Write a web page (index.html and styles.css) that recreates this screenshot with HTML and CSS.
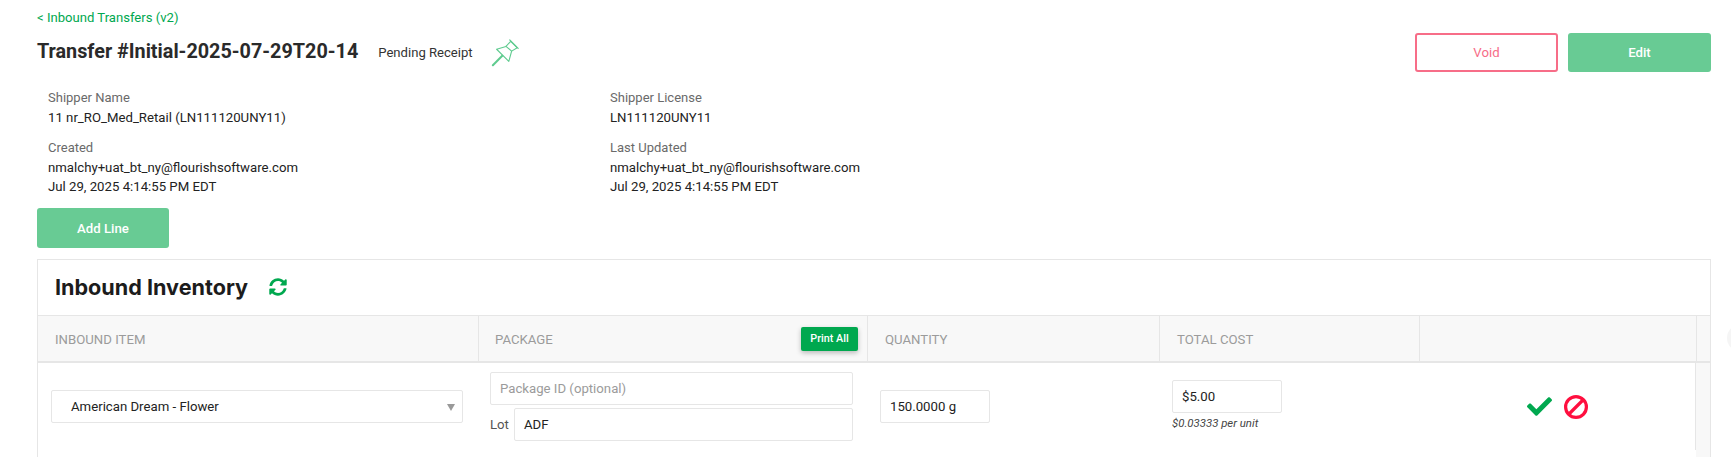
FILE: index.html
```html
<!DOCTYPE html>
<html lang="en">
<head>
<meta charset="utf-8">
<title>Transfer</title>
<link rel="stylesheet" href="styles.css">
</head>
<body>
<div class="page">
  <a class="back" href="#">&lt; Inbound Transfers (v2)</a>
  <header class="top">
    <h1 class="title">Transfer #Initial-2025-07-29T20-14</h1>
    <span class="status">Pending Receipt</span>
    <svg class="pin" viewBox="0 0 32 32" fill="none" stroke="#5fcb8f" stroke-width="1.2" stroke-linejoin="round" stroke-linecap="round">
      <path d="M6 12 L16 9 L21 3.5 L28 10.5 L22 14 L19 25 Z"/>
      <path d="M20 2 L29 11"/>
      <path d="M16 9 L22 14"/>
      <path d="M2 29 L12 19" stroke-width="2.2"/>
    </svg>
    <div class="actions">
      <button class="btn btn-void">Void</button>
      <button class="btn btn-green">Edit</button>
    </div>
  </header>

  <section class="meta">
    <div class="meta-item">
      <div class="label">Shipper Name</div>
      <div class="value">11 nr_RO_Med_Retail (LN111120UNY11)</div>
    </div>
    <div class="meta-item">
      <div class="label">Shipper License</div>
      <div class="value">LN111120UNY11</div>
    </div>
    <div class="meta-item">
      <div class="label">Created</div>
      <div class="value">nmalchy+uat_bt_ny@flourishsoftware.com</div>
      <div class="value">Jul 29, 2025 4:14:55 PM EDT</div>
    </div>
    <div class="meta-item">
      <div class="label">Last Updated</div>
      <div class="value">nmalchy+uat_bt_ny@flourishsoftware.com</div>
      <div class="value">Jul 29, 2025 4:14:55 PM EDT</div>
    </div>
  </section>

  <button class="btn btn-green btn-add">Add Line</button>

  <section class="card">
    <div class="card-head">
      <h2 class="card-title">Inbound Inventory</h2>
      <svg class="refresh" viewBox="0 0 512 512" fill="#00a84f"><path d="M370.72 133.28C339.458 104.008 298.888 87.962 255.848 88c-77.458.068-144.328 53.178-162.791 126.85-1.344 5.363-6.122 9.15-11.651 9.15H24.103c-7.498 0-13.194-6.807-11.807-14.176C33.933 94.924 134.813 8 256 8c66.448 0 126.791 26.136 171.315 68.685L463.03 40.97C478.149 25.851 504 36.559 504 57.941V192c0 13.255-10.745 24-24 24H345.941c-21.382 0-32.09-25.851-16.971-40.971l41.75-41.749zM32 296h134.059c21.382 0 32.09 25.851 16.971 40.971l-41.75 41.75c31.262 29.273 71.835 45.319 114.876 45.28 77.418-.07 144.315-53.144 162.787-126.849 1.344-5.363 6.122-9.15 11.651-9.15h57.304c7.498 0 13.194 6.807 11.807 14.176C478.067 417.076 377.187 504 256 504c-66.448 0-126.791-26.136-171.315-68.685L48.97 471.03C33.851 486.149 8 475.441 8 454.059V320c0-13.255 10.745-24 24-24z"/></svg>
    </div>
    <div class="thead">
      <div class="th">Inbound Item</div>
      <div class="th th-package">Package <button class="print">Print All</button></div>
      <div class="th">Quantity</div>
      <div class="th">Total Cost</div>
      <div class="th"></div>
      <div class="th th-last"></div>
    </div>
    <div class="tbody">
      <div class="td td-item">
        <div class="field field-select">American Dream - Flower<span class="caret"></span></div>
      </div>
      <div class="td td-package">
        <div class="field placeholder">Package ID (optional)</div>
        <div class="lot"><span class="lot-label">Lot</span><div class="field field-lot">ADF</div></div>
      </div>
      <div class="td td-qty"><div class="field field-num">150.0000 g</div></div>
      <div class="td td-cost">
        <div class="field field-num">$5.00</div>
        <div class="per-unit">$0.03333 per unit</div>
      </div>
      <div class="td td-actions">
        <svg class="check" viewBox="0 0 512 512" fill="#00a84f"><path d="M173.898 439.404l-166.4-166.4c-9.997-9.997-9.997-26.206 0-36.204l36.203-36.204c9.997-9.998 26.207-9.998 36.204 0L192 312.69 432.095 72.596c9.997-9.997 26.207-9.997 36.204 0l36.203 36.204c9.997 9.997 9.997 26.206 0 36.204l-294.4 294.401c-9.998 9.997-26.207 9.997-36.204-.001z"/></svg>
        <svg class="ban" viewBox="0 0 24 24" fill="none" stroke="#ff0f3f" stroke-width="3.2"><circle cx="12" cy="12" r="10.4"/><path d="M5 19 L19 5"/></svg>
      </div>
      <div class="td-strip"></div>
    </div>
  </section>
  <div class="edge-dot"></div>
</div>
</body>
</html>
```
FILE: styles.css
```css
* { box-sizing: border-box; }
html, body { margin: 0; padding: 0; background: #fff; }
body { font-family: Roboto, "Liberation Sans", sans-serif; font-size: 13.2px; color: #222; }
.page { position: relative; width: 1731px; height: 457px; overflow: hidden; padding: 9px 20px 0 37px; }

.back { display: block; height: 18px; line-height: 18px; font-size: 13.1px; color: #00a84f; text-decoration: none; }

.top { display: flex; align-items: center; height: 39px; margin-top: 6px; margin-bottom: 15px; }
.title { margin: -2px 0 0; font-size: 19.8px; font-weight: 700; color: #2a2a2a; line-height: 26px; }
.status { margin-left: 20px; font-size: 13.1px; color: #333; }
.pin { width: 30px; height: 30px; margin-left: 18px; }
.actions { display: flex; gap: 10px; margin-left: auto; }

.btn { display: block; width: 143px; height: 39px; padding: 0; border-radius: 3px; font-family: inherit; font-size: 13.2px; font-weight: 500; }
.btn-void { background: #fff; border: 2px solid #f76d88; color: #f76d88; font-weight: 400; }
.btn-green { background: #68cb94; border: 0; color: #fff; }
.btn-add { width: 132px; height: 40px; margin: 11.5px 0 11px; }

.meta { display: grid; grid-template-columns: 562px 561px; row-gap: 10px; padding: 1px 0 0 11px; }
.label, .value { line-height: 19.5px; font-size: 13.2px; }
.label { line-height: 20px; color: #6a6a6a; font-size: 13px; }
.value { color: #222; }

.card { width: 1674px; height: 260px; border: 1px solid #e6e6e6; }
.card-head { display: flex; align-items: center; height: 56px; padding: 0 0 2px 17px; border-bottom: 1px solid #e6e6e6; }
.card-title { margin: 0; font-family: Inter, sans-serif; font-size: 21.6px; font-weight: 700; color: #1c1c1c; }
.refresh { width: 18px; height: 18px; margin-left: 21px; }

.thead { display: grid; grid-template-columns: 441px 389px 292px 260px 277px 13px; height: 47px; background: #f8f8f8; border-bottom: 2px solid #e6e6e6; }
.th { display: flex; align-items: center; padding: 2px 0 0 17px; border-right: 1px solid #e6e6e6; font-size: 13.2px; color: #9b9b9b; text-transform: uppercase; }
.th-package { justify-content: space-between; padding-left: 16px; padding-right: 9px; }
.th-last { border-right: 0; padding: 0; }
.print { width: 57px; height: 24px; margin-top: -2px; padding: 0; border: 0; border-radius: 2px; background: #00a84f; box-shadow: 0 2px 5px rgba(0, 0, 0, .25); font-family: inherit; font-size: 10.8px; font-weight: 500; color: #fff; text-transform: none; }

.tbody { display: grid; grid-template-columns: 441px 389px 292px 260px 276px 14px; height: 150px; align-items: start; }
.td { height: 87px; display: flex; flex-direction: column; justify-content: center; }
.td-item { padding: 0 16px 0 13px; }
.td-package { padding: 0 15px 0 11px; gap: 3px; }
.td-qty { padding-left: 12px; }
.td-cost { justify-content: flex-start; padding: 17px 0 0 12px; }
.td-actions { flex-direction: row; align-items: center; height: 87px; padding-left: 107px; gap: 12px; border-right: 1px solid #e6e6e6; justify-content: flex-start; }
.td-strip { align-self: stretch; height: 150px; background: #f8f8f8; }

.field { position: relative; height: 33px; line-height: 31px; padding: 0 9px; border: 1px solid #e6e6e6; border-radius: 2px; background: #fff; font-size: 13.2px; color: #222; }
.field-select { padding-left: 19px; }
.caret { position: absolute; right: 7px; top: 13px; border-left: 4.5px solid transparent; border-right: 4.5px solid transparent; border-top: 7px solid #999; }
.placeholder { color: #9b9b9b; }
.lot { display: flex; align-items: center; }
.lot-label { width: 24px; color: #555; }
.field-lot { flex: 1; }
.field-num { width: 110px; }
.per-unit { margin-top: 3px; line-height: 14px; font-size: 11.4px; font-style: italic; color: #444; }

.check { width: 25px; height: 25px; }
.ban { width: 24px; height: 24px; }

.edge-dot { position: absolute; left: 1727px; top: 324px; width: 28px; height: 28px; border-radius: 50%; background: #f5f5f5; }
```
